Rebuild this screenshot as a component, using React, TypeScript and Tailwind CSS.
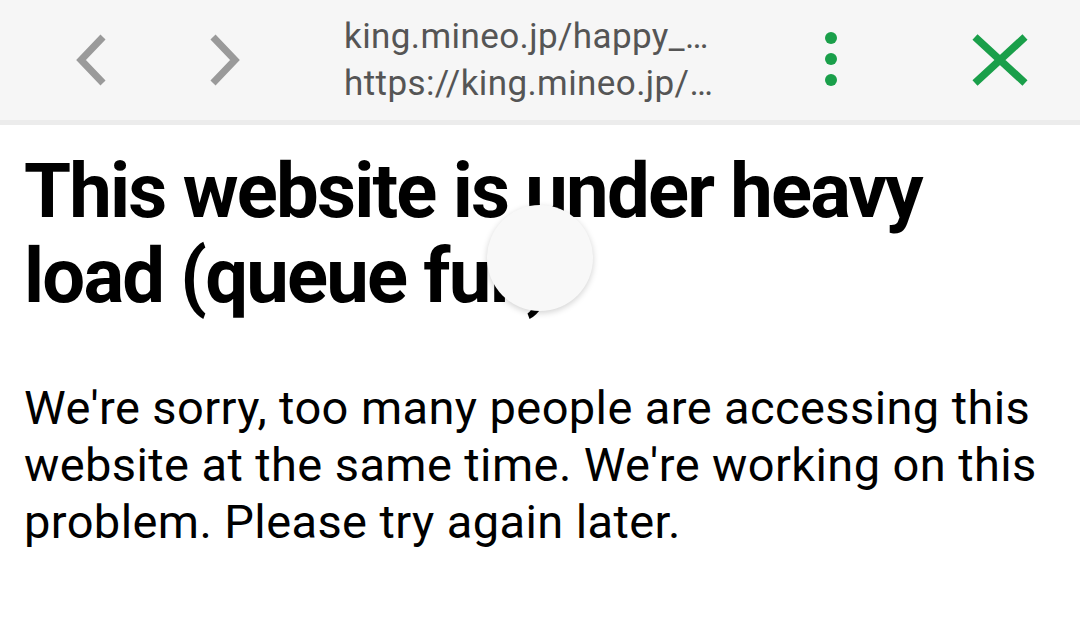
import React from 'react'

function Chevron({ dir }: { dir: 'left' | 'right' }) {
    const d = dir === 'left' ? 'M27 3 L5 26 L27 49' : 'M5 3 L27 26 L5 49'
    return (
        <svg width="32" height="52" viewBox="0 0 32 52">
            <path d={d} fill="none" stroke="#9a9a9a" strokeWidth="7" strokeLinejoin="miter" />
        </svg>
    )
}

export default function App() {
    return (
        <div className="relative w-[1080px] h-[630px] bg-white overflow-hidden" style={{ fontFamily: 'Roboto, "Noto Sans", sans-serif' }}>
            <div className="h-[120px] bg-[#f6f6f6] flex items-center">
                <div className="ml-[76px]">
                    <Chevron dir="left" />
                </div>
                <div className="ml-[100px]">
                    <Chevron dir="right" />
                </div>
                <div className="ml-[104px] w-[420px] flex flex-col text-[35px] leading-[47px] tracking-[0.4px] text-[#555]">
                    <span>king.mineo.jp/happy_…</span>
                    <span>https://king.mineo.jp/…</span>
                </div>
                <div className="ml-[61px] flex flex-col gap-[9px] -mt-[3px]">
                    <span className="w-[12px] h-[12px] rounded-full bg-[#1a9f4a]" />
                    <span className="w-[12px] h-[12px] rounded-full bg-[#1a9f4a]" />
                    <span className="w-[12px] h-[12px] rounded-full bg-[#1a9f4a]" />
                </div>
                <div className="ml-[134px]">
                    <svg width="58" height="54" viewBox="0 0 58 54">
                        <path d="M4 4 L54 50 M54 4 L4 50" stroke="#1a9f4a" strokeWidth="7.5" fill="none" />
                    </svg>
                </div>
            </div>
            <div className="h-[5px] bg-[#ececec]" />
            <div className="px-[24px] pt-[24px]">
                <h1 className="text-[76px] leading-[85px] font-bold text-black tracking-[-1.8px]">
                    This website is under heavy load (queue full)
                </h1>
                <p className="mt-[60px] text-[47px] leading-[57px] text-black tracking-[0.4px]">
                    We're sorry, too many people are accessing this website at the same time. We're working on this problem. Please try again later.
                </p>
            </div>
            <div className="absolute left-[487px] top-[205px] w-[106px] h-[106px] rounded-full bg-[#f8f8f8] shadow-[0_2px_6px_rgba(0,0,0,0.18)]" />
        </div>
    )
}
